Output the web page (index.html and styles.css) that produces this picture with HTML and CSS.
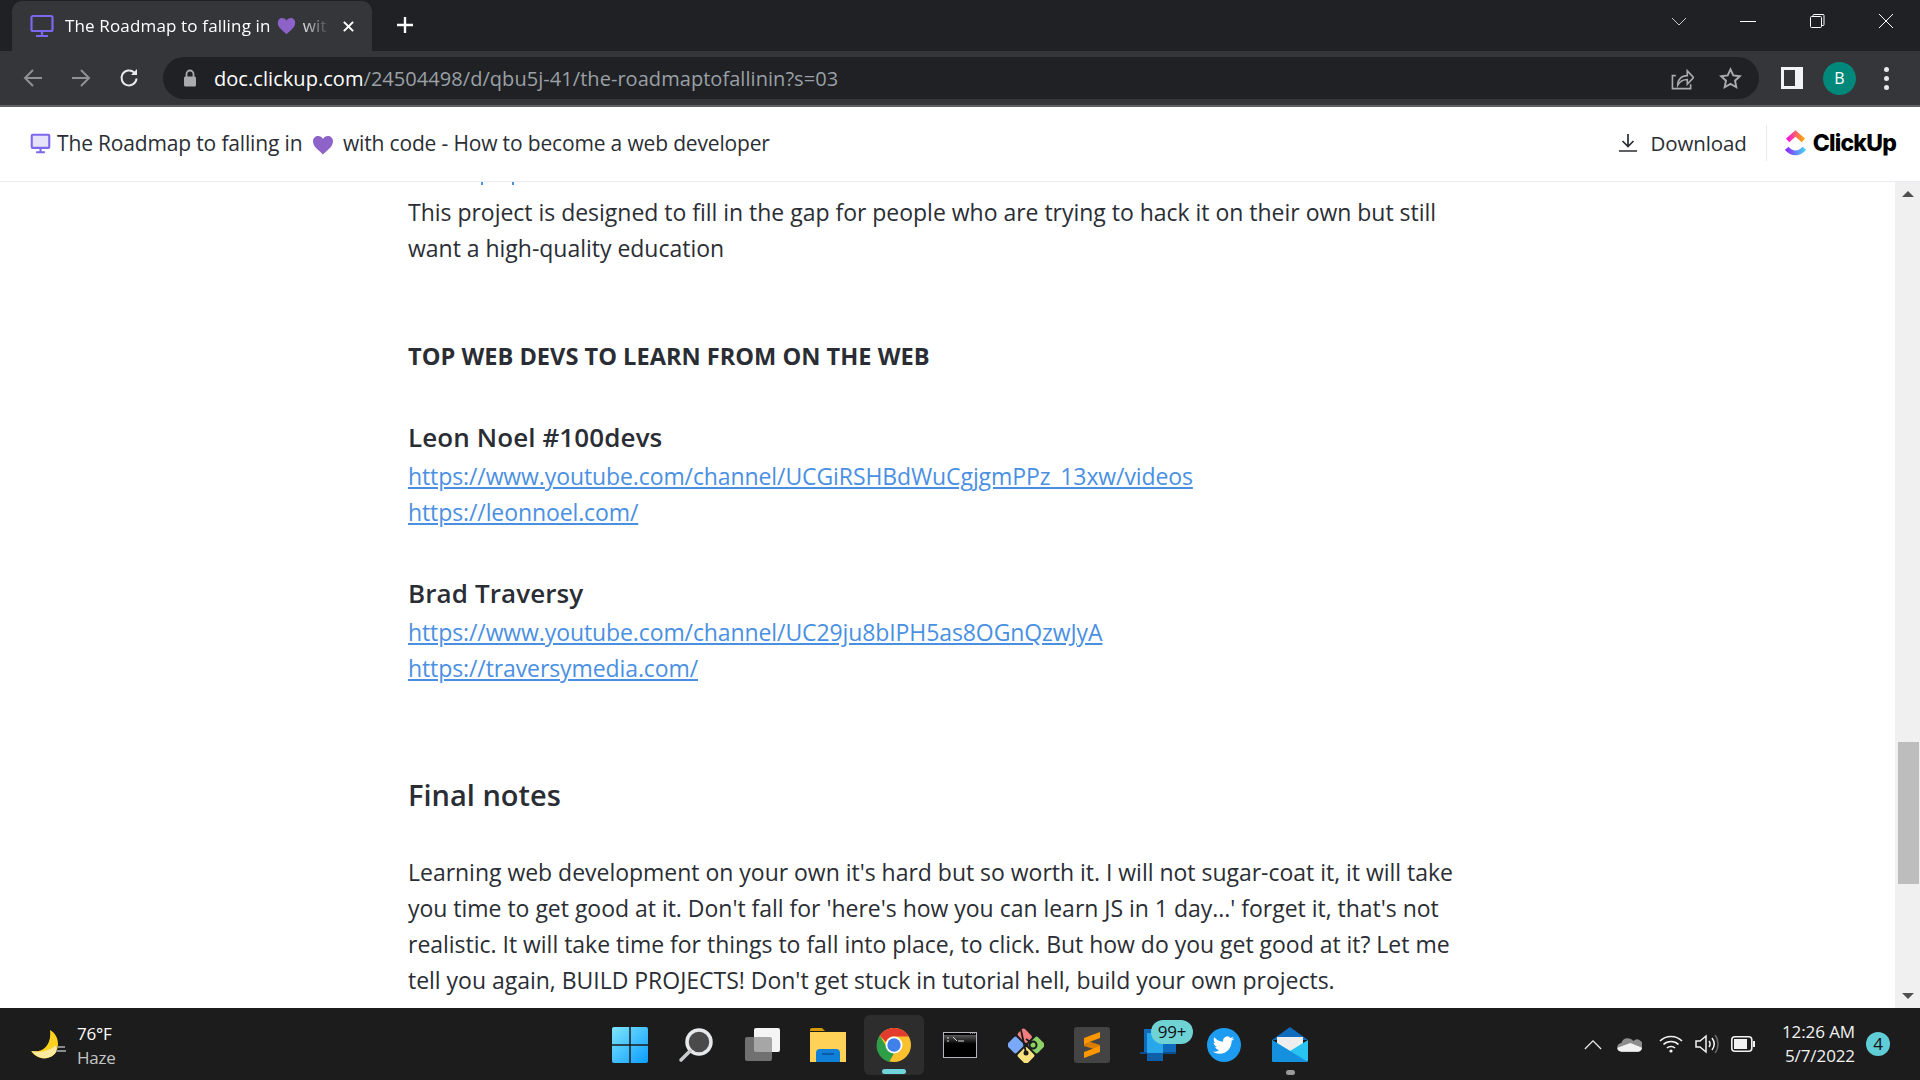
FILE: index.html
```html
<!DOCTYPE html>
<html lang="en">
<head>
    <meta charset="UTF-8">
    <title>The Roadmap to falling in love with code</title>
    <link rel="stylesheet" href="styles.css">
</head>
<body>
    <div class="tabstrip">
        <div class="tab">
            <svg class="tab-icon" viewBox="0 0 24 24" fill="none" stroke="#7b68ee" stroke-width="2.2"><rect x="1.5" y="2" width="21" height="15" rx="1.5"/><path d="M12 17v4M6 22h12"/></svg>
            <div class="tab-title">The Roadmap to falling in <svg class="heart-small" viewBox="0 0 24 22"><path d="M12 21.5C8 17 1 13 1 6.8 1 3.2 3.7 1 6.6 1 9 1 11 2.3 12 4.5 13 2.3 15 1 17.4 1 20.3 1 23 3.2 23 6.8 23 13 16 17 12 21.5z" fill="#8e63c9"/></svg> wit</div>
            <svg class="tab-close" viewBox="0 0 14 14" stroke="#fff" stroke-width="2.2"><path d="M2 2l10 10M12 2L2 12"/></svg>
        </div>
        <svg class="new-tab" viewBox="0 0 18 18" stroke="#fff" stroke-width="2.4"><path d="M9 1v16M1 9h16"/></svg>
        <div class="window-controls">
            <svg class="win-btn" viewBox="0 0 16 16" fill="none" stroke="#c8c9cb" stroke-width="1"><path d="M1 5l7 7 7-7"/></svg>
            <svg class="win-btn" viewBox="0 0 16 16" fill="none" stroke="#fff" stroke-width="1"><path d="M0 8.500h16"/></svg>
            <svg class="win-btn" viewBox="0 0 16 16" fill="none" stroke="#fff" stroke-width="1"><rect x="1.500" y="3.500" width="11" height="11" rx="1"/><path d="M4 3.500V2.500a1 1 0 0 1 1-1h9a1 1 0 0 1 1 1v9a1 1 0 0 1-1 1h-1"/></svg>
            <svg class="win-btn" viewBox="0 0 16 16" fill="none" stroke="#fff" stroke-width="1"><path d="M1 1l14 14M15 1L1 15"/></svg>
        </div>
    </div>

    <div class="toolbar">
        <svg class="nav-btn" viewBox="0 0 20 20" fill="none" stroke="#8f9194" stroke-width="2"><path d="M19 10H2M10 2l-8 8 8 8"/></svg>
        <svg class="nav-btn" viewBox="0 0 20 20" fill="none" stroke="#8f9194" stroke-width="2"><path d="M1 10h17M10 2l8 8-8 8"/></svg>
        <svg class="nav-btn" viewBox="0 0 20 20" fill="none" stroke="#e8eaed" stroke-width="2"><path d="M17.500 10.500a7.500 7.500 0 1 1-2.300-6"/><path d="M18 1v6h-6" fill="#e8eaed" stroke="none"/></svg>
        <div class="omnibox">
            <svg class="lock" viewBox="0 0 14 18"><path d="M3.500 8V5a3.500 3.500 0 0 1 7 0v3" fill="none" stroke="#a9abae" stroke-width="1.800"/><rect x="1" y="7.500" width="12" height="10" rx="1.500" fill="#a9abae"/></svg>
            <div class="url"><span class="url-host">doc.clickup.com</span>/24504498/d/qbu5j-41/the-roadmaptofallinin?s=03</div>
            <svg class="omni-icon" viewBox="0 0 24 24" fill="none" stroke="#a9abae" stroke-width="1.700"><path d="M5 9H1.500v13.500h19V18"/><path d="M7 19c0-6 4-10 10-10V4l6.500 7-6.500 7v-5c-4 0-7.500 1.500-10 6z"/></svg>
            <svg class="omni-icon" viewBox="0 0 24 24" fill="none" stroke="#a9abae" stroke-width="2"><path d="M12 2.500l2.900 6.300 6.900.8-5.100 4.700 1.400 6.800-6.100-3.400-6.100 3.400 1.400-6.800-5.100-4.700 6.900-.8z"/></svg>
        </div>
        <svg class="side-panel" viewBox="0 0 22 22"><rect x="0" y="0" width="22" height="22" fill="#f1f3f4"/><rect x="3" y="3" width="11" height="16" fill="#35363a"/></svg>
        <div class="avatar">B</div>
        <div class="kebab"><span></span><span></span><span></span></div>
    </div>

    <header class="doc-header">
        <svg class="doc-icon" viewBox="0 0 24 24" fill="#e6e2fb" stroke="#7b68ee" stroke-width="2.400"><rect x="2" y="2" width="20" height="15" rx="1"/><path d="M12 17v4M7 22h10" fill="none"/></svg>
        <div class="doc-title">The Roadmap to falling in <svg class="heart" viewBox="0 0 24 22"><path d="M12 21.500C8 17 1 13 1 6.800 1 3.200 3.700 1 6.600 1 9 1 11 2.300 12 4.500 13 2.300 15 1 17.400 1 20.300 1 23 3.200 23 6.800 23 13 16 17 12 21.500z" fill="#8e63c9"/></svg> with code - How to become a web developer</div>
        <div class="download">
            <svg class="download-icon" viewBox="0 0 18 18" fill="none" stroke="#2a2e34" stroke-width="1.700"><path d="M9 0v12M3.500 7L9 12.500 14.500 7M0 17h18"/></svg>
            Download
        </div>
        <div class="logo">
            <svg class="logo-mark" viewBox="0 0 24 30" fill="none" stroke-width="5.500">
                <defs>
                    <linearGradient id="upGrad" x1="0" y1="0" x2="1" y2="0"><stop offset="0" stop-color="#fa12e3"/><stop offset="1" stop-color="#ffa800"/></linearGradient>
                    <linearGradient id="downGrad" x1="0" y1="0" x2="1" y2="0"><stop offset="0" stop-color="#8930fd"/><stop offset="1" stop-color="#49ccf9"/></linearGradient>
                </defs>
                <path d="M3 12l9-8 9 8" stroke="url(#upGrad)"/>
                <path d="M2 21c6 7 14 7 20 0" stroke="url(#downGrad)"/>
            </svg>
            <span class="logo-text">ClickUp</span>
        </div>
    </header>

    <main class="page">
        <div class="doc">
            <div class="cut-line"><span></span><span></span></div>
            <p class="para first">This project is designed to fill in the gap for people who are trying to hack it on their own but still want a high-quality education</p>
            <h4 class="caps-title">TOP WEB DEVS TO LEARN FROM ON THE WEB</h4>
            <h3 class="person">Leon Noel #100devs</h3>
            <a class="link" href="#">https://www.youtube.com/channel/UCGiRSHBdWuCgjgmPPz_13xw/videos</a>
            <a class="link" href="#">https://leonnoel.com/</a>
            <h3 class="person">Brad Traversy</h3>
            <a class="link" href="#">https://www.youtube.com/channel/UC29ju8bIPH5as8OGnQzwJyA</a>
            <a class="link" href="#">https://traversymedia.com/</a>
            <h2 class="section-title">Final notes</h2>
            <p class="para">Learning web development on your own it's hard but so worth it. I will not sugar-coat it, it will take you time to get good at it. Don't fall for 'here's how you can learn JS in 1 day...' forget it, that's not realistic. It will take time for things to fall into place, to click. But how do you get good at it? Let me tell you again, BUILD PROJECTS! Don't get stuck in tutorial hell, build your own projects.</p>
        </div>
        <div class="scrollbar">
            <div class="arrow-up"></div>
            <div class="thumb"></div>
            <div class="arrow-down"></div>
        </div>
    </main>

    <footer class="taskbar">
        <div class="weather">
            <svg class="moon" viewBox="0 0 36 30">
                <path d="M19 0C27 4 29 15 25 22 20 30 7 31 0 21 10 23 21 17 19 0z" fill="#ffd21f"/>
                <path d="M1 21c8 2 17 0 23-5 2 0 2 4 1 6C20 30 7 31 1 21z" fill="#fdeaa0"/>
                <path d="M26 17h8M25 21h10" stroke="#8a8a8a" stroke-width="2"/>
            </svg>
            <div>
                <div class="temp">76°F</div>
                <div class="haze">Haze</div>
            </div>
        </div>

        <div class="apps">
            <div class="app">
                <svg viewBox="0 0 36 36">
                    <defs><linearGradient id="winGrad" x1="0" y1="0" x2="1" y2="1"><stop offset="0" stop-color="#7ee6fb"/><stop offset="1" stop-color="#0b9cff"/></linearGradient></defs>
                    <rect width="36" height="36" rx="2" fill="url(#winGrad)"/>
                    <path d="M18 0v36M0 18h36" stroke="#1c1c1c" stroke-width="1.500"/>
                </svg>
            </div>
            <div class="app">
                <svg viewBox="0 0 36 36" fill="none">
                    <circle cx="21" cy="15" r="12" fill="#4a4a4a" stroke="#e6e9ea" stroke-width="3.500"/>
                    <path d="M12 24l-9 9" stroke="#c9cccd" stroke-width="3.500" stroke-linecap="round"/>
                </svg>
            </div>
            <div class="app">
                <svg viewBox="0 0 36 36">
                    <rect x="10" y="1" width="26" height="24" rx="2" fill="#f4f4f4"/>
                    <rect x="1" y="10" width="27" height="24" rx="2" fill="#8c8c8c" opacity=".75"/>
                </svg>
            </div>
            <div class="app">
                <svg viewBox="0 0 36 36">
                    <path d="M0 3a2 2 0 0 1 2-2h10l3 3h-15z" fill="#d49a06"/>
                    <path d="M0 5h36v30H0z" fill="#ffd257"/>
                    <path d="M6 35V26a4 4 0 0 1 4-4h16a4 4 0 0 1 4 4v9z" fill="#0f7fd8"/>
                    <path d="M12 27h12" stroke="#0a5aa5" stroke-width="2"/>
                </svg>
            </div>
            <div class="app active">
                <svg viewBox="0 0 36 36">
                    <circle cx="18" cy="18" r="17" fill="#fbc02d"/>
                    <path d="M18 1a17 17 0 0 1 14.700 8.500H18a8.500 8.500 0 0 0-8 5.500L3.800 8.700A17 17 0 0 1 18 1z" fill="#e33b2e"/>
                    <path d="M3.800 8.700L11 20.500a8.500 8.500 0 0 0 7 6L13 35A17 17 0 0 1 3.800 8.700z" fill="#2f9e48"/>
                    <circle cx="18" cy="18" r="8.500" fill="#fff"/>
                    <circle cx="18" cy="18" r="6.700" fill="#3f80ea"/>
                </svg>
                <div class="app-indicator"></div>
            </div>
            <div class="app">
                <svg class="terminal" viewBox="0 0 34 26">
                    <defs><linearGradient id="termGrad" x1="0" y1="0" x2="0" y2="1"><stop offset="0" stop-color="#5a5a5a"/><stop offset="1" stop-color="#000"/></linearGradient></defs>
                    <rect x=".5" y=".5" width="33" height="25" fill="#000" stroke="#b4b8bd"/>
                    <rect x="1" y="3" width="32" height="9" fill="url(#termGrad)"/>
                    <path d="M27 1.500h5" stroke="#888" stroke-dasharray="1 1"/>
                    <path d="M4 6h2M4 9h2M10 5l4 4M15 9h6" stroke="#ddd"/>
                </svg>
            </div>
            <div class="app">
                <svg viewBox="0 0 36 36">
                    <g transform="rotate(45 18 18)">
                        <rect x="4" y="7.500" width="13" height="9.500" rx="2" fill="#f47e7e"/>
                        <rect x="19" y="4" width="13" height="13" rx="2" fill="#8cd267"/>
                        <rect x="19" y="19" width="13" height="13" rx="2" fill="#f8e27e"/>
                        <rect x="4" y="19" width="13" height="13" rx="2" fill="#7aa9f7"/>
                    </g>
                    <circle cx="25" cy="18" r="3.500" fill="none" stroke="#1c1c1c" stroke-width="2"/>
                    <circle cx="18" cy="26" r="2.500" fill="#1c1c1c"/>
                    <path d="M13 3l5 23M18 12l6 4" stroke="#1c1c1c" stroke-width="1.800"/>
                </svg>
            </div>
            <div class="app">
                <div class="sublime">
                    <svg viewBox="0 0 18 26"><path d="M1 8L17 13V19L1 14z" fill="#d97e00"/><path d="M1 6L17 0V6L1 12zM1 20L17 14V20L1 26z" fill="#ff9800"/></svg>
                </div>
            </div>
            <div class="app">
                <svg viewBox="0 0 36 36">
                    <rect x="4" y="2" width="32" height="24" fill="#0f6cbd"/>
                    <path d="M0 25h36v2H0z" fill="#0a4f8f"/>
                    <rect x="7" y="6" width="16" height="28" fill="#28a8ea"/>
                    <rect x="7" y="26" width="16" height="8" fill="#0f5ea8"/>
                </svg>
                <div class="count-badge">99+</div>
            </div>
            <div class="app">
                <svg viewBox="0 0 36 36">
                    <circle cx="18" cy="18" r="17" fill="#1d9bf0"/>
                    <path d="M28 11.500c-.8.400-1.600.600-2.500.700.900-.500 1.600-1.400 1.900-2.400-.8.500-1.800.900-2.800 1.100a4.300 4.300 0 0 0-7.400 3.900c-3.600-.2-6.800-1.900-8.900-4.500-1.100 2-.600 4.500 1.300 5.800-.7 0-1.400-.2-2-.5 0 2.100 1.500 3.900 3.500 4.300-.6.200-1.300.2-1.900.1.600 1.700 2.200 2.900 4 3-1.800 1.400-4 2-6.400 1.800 1.900 1.200 4.200 1.900 6.600 1.900 8 0 12.500-6.700 12.200-12.800.900-.6 1.600-1.300 2.400-1.900z" fill="#fff"/>
                </svg>
            </div>
            <div class="app">
                <svg viewBox="0 0 36 36">
                    <path d="M18 0l18 13H0z" fill="#0f6cbd"/>
                    <path d="M5 10h26v10L18 26 5 20z" fill="#eee"/>
                    <path d="M0 13l18 11 18-11v20a2 2 0 0 1-2 2H2a2 2 0 0 1-2-2z" fill="#29c3f2"/>
                    <path d="M0 13l36 22H2a2 2 0 0 1-2-2z" fill="#1490df"/>
                </svg>
                <div class="app-dot"></div>
            </div>
        </div>

        <div class="tray">
            <svg class="tray-icon chevron" viewBox="0 0 20 12" fill="none" stroke="#eee" stroke-width="1.400"><path d="M1 11l9-9 9 9"/></svg>
            <svg class="tray-icon cloud" viewBox="0 0 26 16"><path d="M5 16a4.500 4.500 0 0 1-.5-9A7 7 0 0 1 17 5a5.500 5.500 0 0 1 9 6c0 3-2 5-4 5z" fill="#8d8d8d"/><path d="M5 16c-3 0-5-2-4.500-4L14 7l12 5c0 2-2 4-4 4z" fill="#f2f2f2"/></svg>
            <svg class="tray-icon wifi" viewBox="0 0 24 18" fill="none" stroke="#f2f2f2" stroke-width="1.700"><path d="M1 6c6-6 16-6 22 0M4.500 9.500c4-4 11-4 15 0M8 13c2-2 6-2 8 0"/><circle cx="12" cy="16" r="1.600" fill="#f2f2f2" stroke="none"/></svg>
            <svg class="tray-icon volume" viewBox="0 0 24 20" fill="none" stroke="#f2f2f2" stroke-width="1.500"><path d="M1 7v6h4l6 5V2L5 7z"/><path d="M14 7c1.500 2 1.500 4 0 6M17 4c3 4 3 8 0 12"/><path d="M20 1c4 5 4 13 0 18" stroke="#666"/></svg>
            <svg class="tray-icon battery" viewBox="0 0 24 16"><rect x=".8" y=".8" width="20" height="14.400" rx="3" fill="none" stroke="#f2f2f2" stroke-width="1.600"/><rect x="3" y="3" width="13" height="10" fill="#f2f2f2"/><rect x="22" y="5" width="2" height="6" fill="#f2f2f2"/></svg>
            <div class="clock">
                <div>12:26 AM</div>
                <div>5/7/2022</div>
            </div>
            <div class="notify">4</div>
        </div>
    </footer>
</body>
</html>
```

FILE: styles.css
```css
body {
    margin: 0;
    height: 1080px;
    display: flex;
    flex-direction: column;
    overflow: hidden;
    font-family: "Open Sans", "Noto Sans", sans-serif;
    background-color: white;
}
svg {
    display: block;
    flex-shrink: 0;
}

/* browser chrome */
.tabstrip {
    height: 51px;
    background-color: #202124;
    display: flex;
    align-items: flex-end;
}
.tab {
    width: 360px;
    height: 50px;
    margin-left: 12px;
    background-color: #35363a;
    border-radius: 10px 10px 0 0;
    display: flex;
    align-items: center;
    color: white;
    box-sizing: border-box;
    padding-left: 18px;
}
.tab-icon {
    width: 24px;
    height: 24px;
    margin-right: 11px;
}
.tab-title {
    width: 265px;
    padding-bottom: 2px;
    white-space: nowrap;
    font-size: 17px;
    letter-spacing: 0.15px;
    -webkit-mask-image: linear-gradient(to right, black 88%, transparent 100%);
    mask-image: linear-gradient(to right, black 88%, transparent 100%);
}
.heart-small {
    display: inline-block;
    width: 19px;
    height: 18px;
    vertical-align: -3px;
    margin: 0 2px;
}
.tab-close {
    width: 13px;
    height: 13px;
    margin-left: 12px;
}
.new-tab {
    width: 18px;
    height: 18px;
    margin: 0 0 17px 24px;
}
.window-controls {
    margin-left: auto;
    margin-right: 26px;
    align-self: flex-start;
    margin-top: 13px;
    display: flex;
    gap: 53px;
}
.win-btn {
    width: 16px;
    height: 16px;
}
.toolbar {
    height: 54px;
    background-color: #35363a;
    border-bottom: 2px solid #5f6063;
    display: flex;
    align-items: center;
    padding-left: 23px;
}
.nav-btn {
    width: 20px;
    height: 20px;
    margin-right: 28px;
}
.omnibox {
    width: 1596px;
    height: 42px;
    margin-left: -4px;
    background-color: #202124;
    border-radius: 21px;
    display: flex;
    align-items: center;
    box-sizing: border-box;
    padding: 0 17px 0 20px;
}
.lock {
    width: 14px;
    height: 18px;
    margin-right: 17px;
}
.url {
    flex: 1;
    font-size: 20px;
    letter-spacing: 0.05px;
    color: #9aa0a6;
    white-space: nowrap;
}
.url-host {
    color: white;
}
.omni-icon {
    width: 23px;
    height: 23px;
    margin-left: 25px;
}
.side-panel {
    width: 22px;
    height: 22px;
    margin-left: 22px;
}
.avatar {
    width: 33px;
    height: 33px;
    margin-left: 20px;
    border-radius: 50%;
    background-color: #00897b;
    color: white;
    font-size: 16px;
    display: flex;
    align-items: center;
    justify-content: center;
}
.kebab {
    margin-left: 28px;
    display: flex;
    flex-direction: column;
    gap: 4px;
}
.kebab span {
    width: 5px;
    height: 5px;
    border-radius: 50%;
    background-color: #e8eaed;
}

/* clickup doc header */
.doc-header {
    height: 75px;
    box-sizing: border-box;
    border-bottom: 1px solid #e9ebf0;
    display: flex;
    align-items: center;
    padding: 0 24px 2px 30px;
    color: #2a2e34;
}
.doc-icon {
    width: 21px;
    height: 21px;
    margin-right: 6px;
}
.doc-title {
    font-size: 21px;
    font-weight: 500;
    letter-spacing: -0.16px;
    white-space: nowrap;
}
.heart {
    display: inline-block;
    width: 22px;
    height: 20px;
    vertical-align: -4px;
    margin: 0 4px;
}
.download {
    margin-left: auto;
    display: flex;
    align-items: center;
    font-size: 20.500px;
    letter-spacing: -0.1px;
    color: #2a2e34;
}
.download-icon {
    width: 18px;
    height: 18px;
    margin-right: 13px;
}
.logo {
    margin-left: 19px;
    padding-left: 18px;
    height: 36px;
    border-left: 1px solid #e9ebf0;
    display: flex;
    align-items: center;
}
.logo-mark {
    width: 21px;
    height: 28px;
    margin-right: 7px;
}
.logo-text {
    font-family: Inter, sans-serif;
    font-weight: 800;
    font-size: 23px;
    letter-spacing: -0.8px;
    color: black;
}

/* doc body */
.page {
    flex: 1;
    min-height: 0;
    display: flex;
}
.doc {
    flex: 1;
    padding-left: 408px;
    overflow: hidden;
    color: #2a2e34;
}
.cut-line {
    height: 3px;
    display: flex;
    gap: 29px;
    padding-left: 73px;
}
.cut-line span {
    width: 2px;
    height: 3px;
    background-color: #4a90e2;
}
.para {
    width: 1060px;
    margin: 37px 0 0;
    font-size: 23px;
    line-height: 36px;
    letter-spacing: -0.02px;
}
.para.first {
    margin-top: 9px;
}
.caps-title {
    margin: 72px 0 0;
    font-size: 23.600px;
    line-height: 36px;
    font-weight: 700;
}
.person {
    margin: 45px 0 3px;
    font-size: 26px;
    line-height: 36px;
    font-weight: 600;
    letter-spacing: 0.1px;
}
.link {
    display: block;
    width: fit-content;
    font-size: 23px;
    line-height: 36px;
    letter-spacing: -0.1px;
    color: #4a90e2;
}
.section-title {
    margin: 87px 0 0;
    font-size: 29px;
    line-height: 44px;
    font-weight: 600;
}
.scrollbar {
    width: 25px;
    background-color: #f0f0f0;
    display: flex;
    flex-direction: column;
    align-items: center;
    padding-top: 9px;
    padding-bottom: 9px;
    box-sizing: border-box;
    padding-left: 1px;
}
.arrow-up {
    border: 6px solid transparent;
    border-top: 0;
    border-bottom: 6px solid #505050;
}
.arrow-down {
    border: 6px solid transparent;
    border-bottom: 0;
    border-top: 6px solid #505050;
    margin-top: 109px;
}
.thumb {
    width: 21px;
    height: 142px;
    margin-top: 545px;
    background-color: #bdbdbd;
}

/* windows taskbar */
.taskbar {
    height: 72px;
    background-color: #1c1c1c;
    display: grid;
    grid-template-columns: 1fr auto 1fr;
    align-items: center;
    color: white;
}
.weather {
    display: flex;
    align-items: center;
    padding: 2px 0 0 31px;
}
.moon {
    width: 36px;
    height: 30px;
    margin-right: 10px;
}
.temp {
    font-size: 17px;
    line-height: 25px;
    letter-spacing: -0.2px;
}
.haze {
    font-size: 17px;
    line-height: 24px;
    letter-spacing: -0.2px;
    color: #c4c4c4;
}
.apps {
    display: flex;
    gap: 6px;
    height: 72px;
}
.app {
    width: 60px;
    height: 60px;
    margin-top: 7px;
    border-radius: 6px;
    display: flex;
    align-items: center;
    justify-content: center;
    position: relative;
}
.app svg {
    width: 36px;
    height: 36px;
}
.app svg.terminal {
    width: 34px;
    height: 26px;
}
.app.active {
    background-color: #2d2d2d;
}
.app-indicator {
    position: absolute;
    left: 18px;
    bottom: 1px;
    width: 24px;
    height: 5px;
    border-radius: 3px;
    background-color: #6fd3dc;
}
.app-dot {
    position: absolute;
    left: 26px;
    bottom: 0;
    width: 9px;
    height: 5px;
    border-radius: 3px;
    background-color: #9a9a9a;
}
.sublime {
    width: 36px;
    height: 36px;
    border-radius: 3px;
    background-color: #444;
    display: flex;
    align-items: center;
    justify-content: center;
}
.app .sublime svg {
    width: 18px;
    height: 26px;
}
.count-badge {
    position: absolute;
    top: 5px;
    left: 23px;
    width: 42px;
    height: 24px;
    border-radius: 12px;
    background-color: #6fd3d6;
    color: #111;
    font-size: 17px;
    line-height: 24px;
    letter-spacing: -0.3px;
    text-align: center;
}
.tray {
    display: flex;
    align-items: center;
    justify-content: flex-end;
    padding-right: 30px;
}
.tray-icon.chevron {
    width: 18px;
    height: 11px;
    margin-right: 15px;
}
.tray-icon.cloud {
    width: 25px;
    height: 16px;
    margin-right: 17px;
}
.tray-icon.wifi {
    width: 24px;
    height: 18px;
    margin-right: 12px;
}
.tray-icon.volume {
    width: 24px;
    height: 20px;
    margin-right: 12px;
}
.tray-icon.battery {
    width: 24px;
    height: 16px;
}
.clock {
    width: 80px;
    margin: 0 11px 0 20px;
    font-size: 17px;
    line-height: 24px;
    letter-spacing: -0.1px;
    text-align: right;
    white-space: nowrap;
    color: #f2f2f2;
}
.notify {
    width: 24px;
    height: 24px;
    border-radius: 50%;
    background-color: #60cdd6;
    color: #111;
    font-size: 17px;
    line-height: 24px;
    text-align: center;
}
```
